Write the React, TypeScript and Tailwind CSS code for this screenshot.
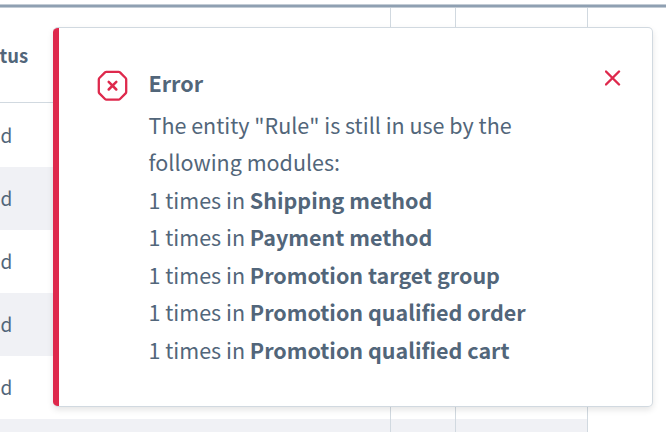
import type React from "react"

const modules = [
  "Shipping method",
  "Payment method",
  "Promotion target group",
  "Promotion qualified order",
  "Promotion qualified cart",
]

const rows = ["d", "d", "d", "d", "d", ""]

function Row({ children, className }: { children?: React.ReactNode; className: string }) {
  return (
    <div className={`grid w-[588px] grid-cols-[391px_65px_132px] ${className}`}>
      <div className="flex items-center border-r border-[#d1d9e0]">{children}</div>
      <div className="border-r border-[#d1d9e0]" />
      <div className="border-r border-[#d1d9e0]" />
    </div>
  )
}

function ErrorIcon() {
  return (
    <svg className="mt-[14px] h-8 w-8 shrink-0" viewBox="0 0 32 32" fill="none" stroke="#de294c">
      <path
        d="M10.4 1.8H22.6Q23.4 1.8 24 2.4L29.6 8Q30.2 8.6 30.2 9.4V22Q30.2 22.8 29.6 23.4L24 29Q23.4 29.6 22.6 29.6H10.4Q9.6 29.6 9 29L3.4 23.4Q2.8 22.8 2.8 22V9.4Q2.8 8.6 3.4 8L9 2.4Q9.6 1.8 10.4 1.8Z"
        strokeWidth="2.3"
      />
      <path d="M12.7 11.9L20.3 19.5M20.3 11.9L12.7 19.5" strokeWidth="2.5" strokeLinecap="round" />
    </svg>
  )
}

function CloseIcon() {
  return (
    <svg className="h-4 w-4" viewBox="0 0 16 16" fill="none" stroke="#de294c">
      <path d="M1 1.5L14 14.5M14 1.5L1 14.5" strokeWidth="2.4" strokeLinecap="round" />
    </svg>
  )
}

export default function App() {
  return (
    <div className="relative h-[432px] w-[666px] overflow-hidden bg-white font-['Noto_Sans_CJK_SC',sans-serif] text-[#52667a]">
      <div className="pt-[4px]">
        <div className="h-[4px] border-y border-[#c3ccd5] bg-[#8fa0b2]" />
        <Row className="h-[94px]">
          <span className="-ml-[0.5px] pt-0.5 text-[18.5px] font-bold">tus</span>
        </Row>
        <div className="h-px w-[588px] bg-[#d1d9e0]" />
        <div className="h-px" />
        {rows.map((label, i) => (
          <Row key={i} className={i % 2 ? "h-[63px] bg-[#f0f1f5]" : "h-[63px]"}>
            <span className="ml-[0.5px] text-[19px]">{label}</span>
          </Row>
        ))}
      </div>

      <div className="absolute top-[27px] left-[53px] flex h-[380px] w-[600px] overflow-hidden rounded-[5px] border border-l-0 border-[#d1d9e0] bg-white shadow-[0_3px_6px_rgba(0,0,0,0.1)]">
        <div className="w-[6px] shrink-0 bg-[#de294c]" />
        <div className="flex flex-1 pt-[28px] pr-[31px] pl-[37px]">
          <ErrorIcon />
          <div className="ml-[20.5px] flex-1 pt-[8px] text-[21.5px] leading-[37.5px] whitespace-nowrap">
            <div className="mb-[4px] font-bold">Error</div>
            <p>
              The entity "Rule" is still in use by the
              <br />
              following modules:
            </p>
            <ul>
              {modules.map((name) => (
                <li key={name}>
                  1 times in <b className="font-bold">{name}</b>
                </li>
              ))}
            </ul>
          </div>
          <button className="mt-[14px] h-4 w-4" aria-label="Close">
            <CloseIcon />
          </button>
        </div>
      </div>
    </div>
  )
}
